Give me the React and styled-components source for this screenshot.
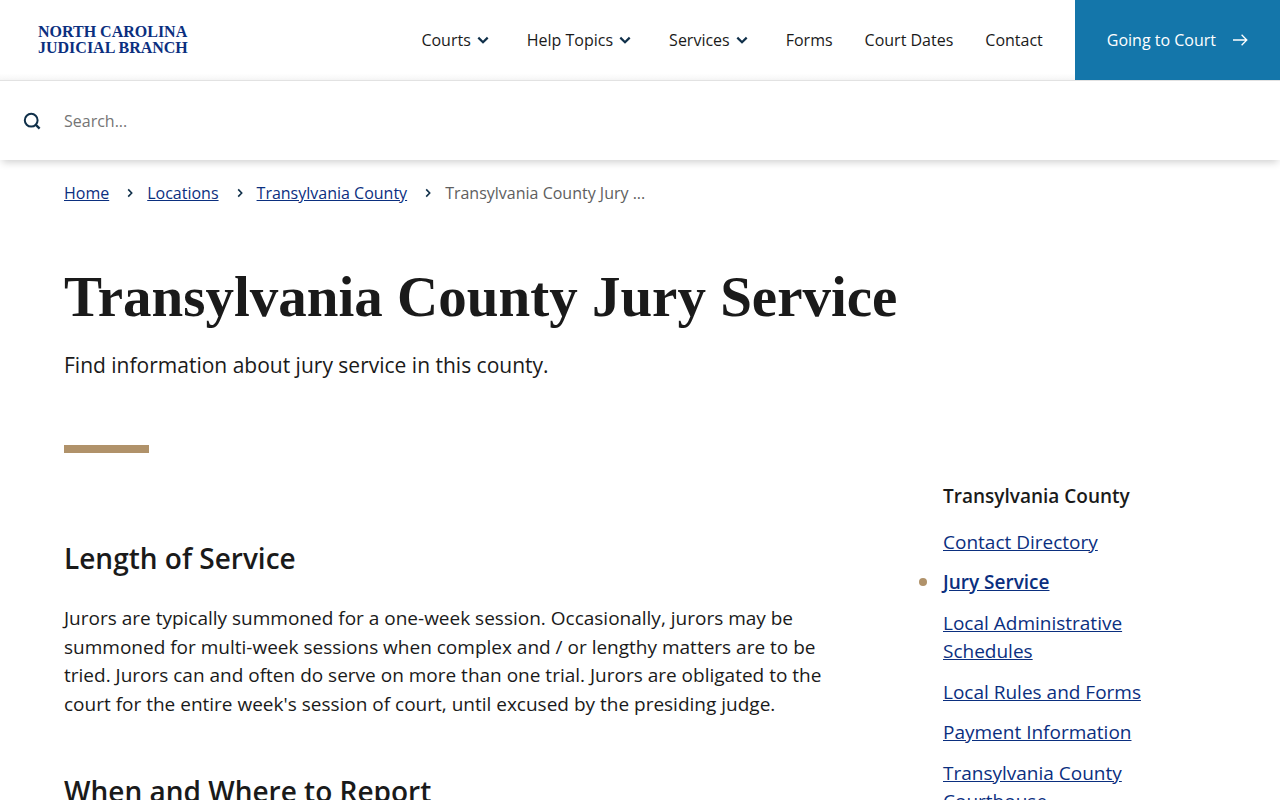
import styled, { createGlobalStyle } from "styled-components";

const menu = [
  { label: "Courts", hasMenu: true },
  { label: "Help Topics", hasMenu: true },
  { label: "Services", hasMenu: true },
  { label: "Forms" },
  { label: "Court Dates" },
  { label: "Contact" },
];
const crumbs = ["Home", "Locations", "Transylvania County"];
const sideLinks = [
  "Contact Directory",
  "Jury Service",
  "Local Administrative Schedules",
  "Local Rules and Forms",
  "Payment Information",
  "Transylvania County Courthouse",
];

function ChevronDown() {
  return (
    <svg width="24" height="24" viewBox="0 0 24 24" fill="none" stroke="#10304a" strokeWidth="2.2" aria-hidden="true">
      <path d="M7.3 9.6 12 14.2 16.7 9.6" />
    </svg>
  );
}

function ChevronRight() {
  return (
    <svg width="16" height="16" viewBox="0 0 16 16" fill="none" stroke="#10304a" strokeWidth="1.6" aria-hidden="true">
      <path d="M6.2 4.4 9.7 8 6.2 11.6" />
    </svg>
  );
}

function App() {
  return (
    <>
      <GlobalStyle />
      <Header>
        <Brand href="#">
          <span>NORTH CAROLINA</span>
          <span>JUDICIAL BRANCH</span>
        </Brand>
        <Nav aria-label="Main">
          {menu.map(({ label, hasMenu }) =>
            hasMenu ? (
              <NavButton key={label} type="button" aria-haspopup="true">
                {label}
                <ChevronDown />
              </NavButton>
            ) : (
              <NavLink key={label} href="#">{label}</NavLink>
            )
          )}
        </Nav>
        <CourtLink href="#">
          Going to Court
          <svg width="16" height="16" viewBox="0 0 16 16" fill="none" stroke="#fff" strokeWidth="1.3" aria-hidden="true">
            <path d="M1 8H14.6M9.6 2.8 14.8 8 9.6 13.2" />
          </svg>
        </CourtLink>
      </Header>
      <SearchForm role="search" onSubmit={(e) => e.preventDefault()}>
        <SearchButton type="submit" aria-label="Search">
          <svg width="18" height="18" viewBox="0 0 18 18" fill="none" stroke="#10304a" strokeWidth="2" aria-hidden="true">
            <circle cx="8.2" cy="8.2" r="6.4" />
            <path d="M12.6 12.6 16.6 16.6" strokeWidth="2.3" />
          </svg>
        </SearchButton>
        <SearchInput type="text" placeholder="Search..." aria-label="Search the site" />
      </SearchForm>
      <Page>
        <Breadcrumb aria-label="Breadcrumb">
          {crumbs.map((crumb) => (
            <Crumb key={crumb}>
              <TextLink href="#">{crumb}</TextLink>
              <ChevronRight />
            </Crumb>
          ))}
          <CurrentCrumb aria-current="page">Transylvania County Jury ...</CurrentCrumb>
        </Breadcrumb>
        <Title>Transylvania County Jury Service</Title>
        <Lead>Find information about jury service in this county.</Lead>
        <Rule />
        <Columns>
          <Article>
            <Heading>Length of Service</Heading>
            <Text>
              Jurors are typically summoned for a one-week session. Occasionally, jurors may be
              summoned for multi-week sessions when complex and / or lengthy matters are to be
              tried. Jurors can and often do serve on more than one trial. Jurors are obligated to
              the court for the entire week's session of court, until excused by the presiding
              judge.
            </Text>
            <Heading>When and Where to Report</Heading>
          </Article>
          <Sidebar>
            <SideTitle>Transylvania County</SideTitle>
            <SideList>
              {sideLinks.map((label) => (
                <SideItem key={label} $active={label === "Jury Service"}>
                  <TextLink href="#">{label}</TextLink>
                </SideItem>
              ))}
            </SideList>
          </Sidebar>
        </Columns>
      </Page>
    </>
  );
}

const GlobalStyle = createGlobalStyle`
  * {
    box-sizing: border-box;
  }
  body {
    margin: 0;
    background-color: #fff;
    color: #1a1a1a;
    font-family: "Open Sans", sans-serif;
    font-size: 16px;
    line-height: 24px;
  }
`;
const Header = styled.header`
  height: 80px;
  display: flex;
  align-items: center;
  background: linear-gradient(#fff 92%, #f6f6f6);
`;
const Brand = styled.a`
  display: flex;
  flex-direction: column;
  margin-left: 38px;
  color: #0b2f7f;
  font-family: "Liberation Serif", serif;
  font-size: 16px;
  font-weight: 700;
  line-height: 16px;
  text-decoration: none;
`;
const Nav = styled.nav`
  display: flex;
  align-items: center;
  margin-left: auto;
  padding-right: 16px;
`;
const NavLink = styled.a`
  padding: 0 16px;
  color: #1a1a1a;
  text-decoration: none;
`;
const NavButton = styled.button`
  display: flex;
  align-items: center;
  padding: 0 16px;
  border: 0;
  background: none;
  color: #1a1a1a;
  font: inherit;
`;
const CourtLink = styled.a`
  height: 100%;
  display: flex;
  align-items: center;
  gap: 16px;
  padding: 0 32px;
  background-color: #1476aa;
  color: #fff;
  font-weight: 500;
  text-decoration: none;
`;
const SearchForm = styled.form`
  height: 80px;
  display: flex;
  align-items: center;
  border-top: 1px solid #e2e2e2;
  background-color: #fff;
  box-shadow: 0 4px 8px -2px rgba(0, 0, 0, 0.2);
`;
const SearchButton = styled.button`
  width: 64px;
  height: 100%;
  display: flex;
  align-items: center;
  justify-content: center;
  border: 0;
  background: none;
`;
const SearchInput = styled.input`
  flex: 1;
  height: 100%;
  padding: 0;
  border: 0;
  outline: 0;
  background: none;
  font: inherit;
  &::placeholder {
    color: #757575;
  }
`;
const Page = styled.main`
  padding: 21px 64px 64px;
`;
const Breadcrumb = styled.nav`
  display: flex;
`;
const Crumb = styled.span`
  display: flex;
  align-items: center;
  svg {
    margin: 0 9px 0 13px;
  }
`;
const CurrentCrumb = styled.span`
  color: #5e5e5e;
`;
const TextLink = styled.a`
  color: #0b2f7f;
  text-decoration: underline;
`;
const Title = styled.h1`
  margin: 56px 0 0;
  font-family: "Liberation Serif", serif;
  font-size: 57px;
  font-weight: 700;
  line-height: 72px;
`;
const Lead = styled.p`
  margin: 16px 0 0;
  font-size: 21px;
  line-height: 32px;
`;
const Rule = styled.div`
  width: 85px;
  height: 8px;
  margin-top: 64px;
  background-color: #b0926a;
`;
const Columns = styled.div`
  display: grid;
  grid-template-columns: 2fr 1fr;
  margin-top: 29px;
`;
const Article = styled.article`
  padding-top: 56px;
`;
const Heading = styled.h2`
  margin: 0;
  font-size: 28px;
  font-weight: 600;
  line-height: 40px;
`;
const Text = styled.p`
  margin: 26px 0 53px;
  font-size: 19px;
  line-height: 1.5;
`;
const Sidebar = styled.aside`
  padding: 0 40px 0 111px;
  font-size: 19px;
  line-height: 1.5;
`;
const SideTitle = styled.h3`
  margin: 0 0 17px;
  font-size: 19px;
  font-weight: 600;
`;
const SideList = styled.ul`
  display: flex;
  flex-direction: column;
  gap: 12px;
  margin: 0;
  padding: 0;
  list-style: none;
`;
const SideItem = styled.li`
  position: relative;
  font-weight: ${({ $active }) => ($active ? 600 : 400)};
  &::before {
    content: "";
    display: ${({ $active }) => ($active ? "block" : "none")};
    position: absolute;
    top: 10px;
    left: -24px;
    width: 8px;
    height: 8px;
    border-radius: 50%;
    background-color: #b0926a;
  }
`;

export default App;
